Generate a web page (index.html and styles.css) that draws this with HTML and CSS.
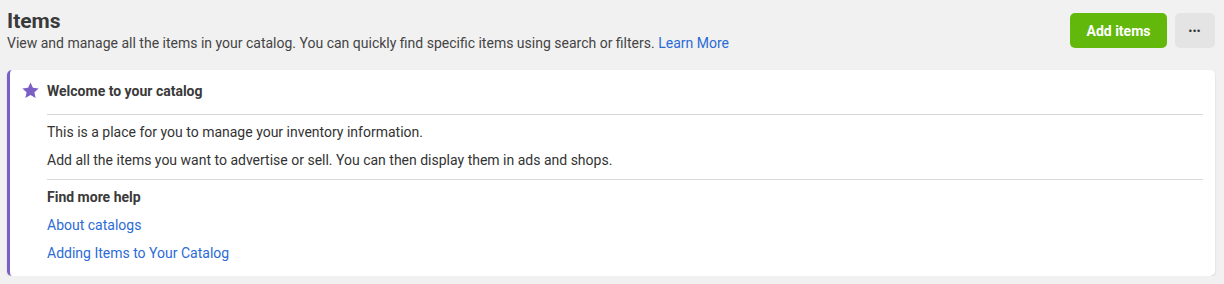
FILE: index.html
```html
<!DOCTYPE html>
<html lang="en">

<head>
    <meta charset="UTF-8">
    <meta name="viewport" content="width=device-width, initial-scale=1.0">
    <title>Items</title>
    <link rel="stylesheet" href="styles.css">
</head>

<body>
    <div class="page">
        <div class="header">
            <div class="header-text">
                <h1 class="title">Items</h1>
                <p class="subtitle">View and manage all the items in your catalog. You can quickly find specific items using search or filters. <a href="javascript:;">Learn More</a></p>
            </div>
            <div class="actions">
                <button class="btn-primary">Add items</button>
                <button class="btn-more">&bull;&bull;&bull;</button>
            </div>
        </div>
        <div class="card">
            <div class="card-icon">
                <svg width="17" height="17" viewBox="0 0 24 24"><path fill="#7b5fc5" d="M12 .8l3.4 7.4 8.1.9-6 5.5 1.7 8L12 18.5l-7.2 4.1 1.7-8-6-5.5 8.1-.9z"/></svg>
            </div>
            <div class="card-body">
                <p class="card-title">Welcome to your catalog</p>
                <hr class="sep-top" />
                <p class="line">This is a place for you to manage your inventory information.</p>
                <p class="line">Add all the items you want to advertise or sell. You can then display them in ads and shops.</p>
                <hr class="sep-mid" />
                <p class="line bold">Find more help</p>
                <p class="line"><a href="javascript:;">About catalogs</a></p>
                <p class="line"><a href="javascript:;">Adding Items to Your Catalog</a></p>
            </div>
        </div>
    </div>
</body>

</html>
```

FILE: styles.css
```css
html * {
    padding: 0;
    margin: 0;
    border: 0;
    box-sizing: border-box;
}

body {
    background: #f1f1f1;
    font-family: Roboto, "Liberation Sans", sans-serif;
    color: #333;
}

a {
    color: #2b6bd6;
    text-decoration: none;
}

.page {
    padding: 9px 9px 0 7px;
}

.header {
    display: flex;
    align-items: center;
    justify-content: space-between;
}

.title {
    font-size: 21px;
    line-height: 25px;
    font-weight: bold;
    color: #3a3a3a;
}

.subtitle {
    font-size: 14px;
    line-height: 18px;
    color: #444;
}

.actions {
    display: flex;
    gap: 8px;
}

.btn-primary {
    background: #62b90b;
    color: #fff;
    font-family: inherit;
    font-size: 14px;
    font-weight: bold;
    height: 35px;
    width: 97px;
    border-radius: 5px;
}

.btn-more {
    background: #e4e4e4;
    color: #333;
    font-size: 9px;
    letter-spacing: 1px;
    height: 35px;
    width: 40px;
    border-radius: 5px;
}

.card {
    display: flex;
    margin-top: 18px;
    background: #fff;
    border-left: 3px solid #7b5fc5;
    border-radius: 5px;
    box-shadow: 0 1px 2px rgba(0, 0, 0, .15);
    padding: 11px 12px 13px 12px;
}

.card-icon {
    width: 25px;
    padding-top: 1px;
}

.card-body {
    flex: 1;
    font-size: 14px;
}

.card-title {
    font-size: 14px;
    font-weight: bold;
    line-height: 20px;
    color: #3a3a3a;
}

.card-body hr {
    border-top: 1px solid #d8d8d8;
}

.sep-top {
    margin: 13px 0 7px;
}

.sep-mid {
    margin: 9px 0 7px;
}

.card-body hr + .line {
    margin-top: 0;
}

.line {
    line-height: 20px;
    margin-top: 8px;
}

.bold {
    font-weight: bold;
    color: #3a3a3a;
}
```
